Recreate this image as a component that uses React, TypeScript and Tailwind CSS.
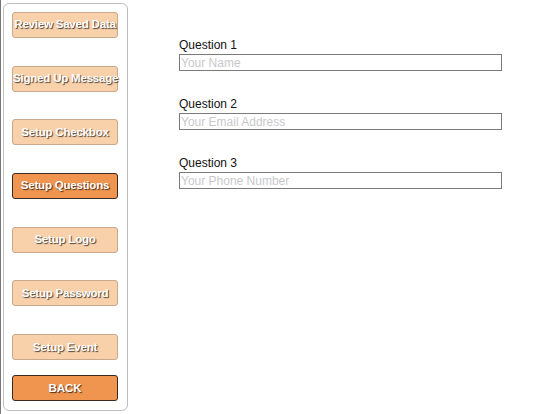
import { useState } from "react";

const menu = [
  "Review Saved Data",
  "Signed Up Message",
  "Setup Checkbox",
  "Setup Questions",
  "Setup Logo",
  "Setup Password",
  "Setup Event",
];

const questions = [
  { label: "Question 1", placeholder: "Your Name" },
  { label: "Question 2", placeholder: "Your Email Address" },
  { label: "Question 3", placeholder: "Your Phone Number" },
];

export default function App() {
  const [active, setActive] = useState("Setup Questions");

  return (
    <div
      className="flex w-[552px] h-[414px] bg-white border-l border-[#777] overflow-hidden"
      style={{ fontFamily: "'Liberation Sans', Arial, sans-serif" }}
    >
      {/* sidebar */}
      <aside className="ml-[2px] mt-[3px] w-[125px] h-[408px] shrink-0 border border-[#bdbdbd] rounded-[6px] flex flex-col px-[8px] pt-[8px]">
        <div className="flex flex-col gap-[27.7px]">
          {menu.map((m) => {
            const on = m === active;
            return (
              <button
                key={m}
                onClick={() => setActive(m)}
                className={
                  on
                    ? "h-[26px] w-[106px] rounded-[3px] border border-[#3a2a20] bg-[#f0954f] text-white text-[11.5px] font-bold whitespace-nowrap tracking-[-0.2px] [text-shadow:1px_1px_1px_rgba(0,0,0,0.7)]"
                    : "h-[26px] w-[106px] rounded-[3px] border border-[#c9a88c] bg-[#f8d1aa] text-white text-[11.5px] font-bold whitespace-nowrap tracking-[-0.2px] [text-shadow:1px_1px_1px_rgba(0,0,0,0.7)]"
                }
              >
                {m}
              </button>
            );
          })}
        </div>
        <button className="mt-[15px] h-[26px] w-[106px] rounded-[3px] border border-[#3a2a20] bg-[#f0954f] text-white text-[11.5px] font-bold [text-shadow:1px_1px_1px_rgba(0,0,0,0.7)]">
          BACK
        </button>
      </aside>

      {/* form */}
      <main className="flex flex-col gap-[26px] pl-[51px] pt-[38px]">
        {questions.map((q) => (
          <div key={q.label} className="flex flex-col gap-[2px]">
            <label className="text-[12px] leading-[14px] text-[#111]">{q.label}</label>
            <input
              placeholder={q.placeholder}
              className="w-[323px] h-[17px] border border-[#7a7a7a] px-[1px] text-[12px] text-[#222] placeholder:text-[#c8c8cc] outline-none"
            />
          </div>
        ))}
      </main>
    </div>
  );
}
